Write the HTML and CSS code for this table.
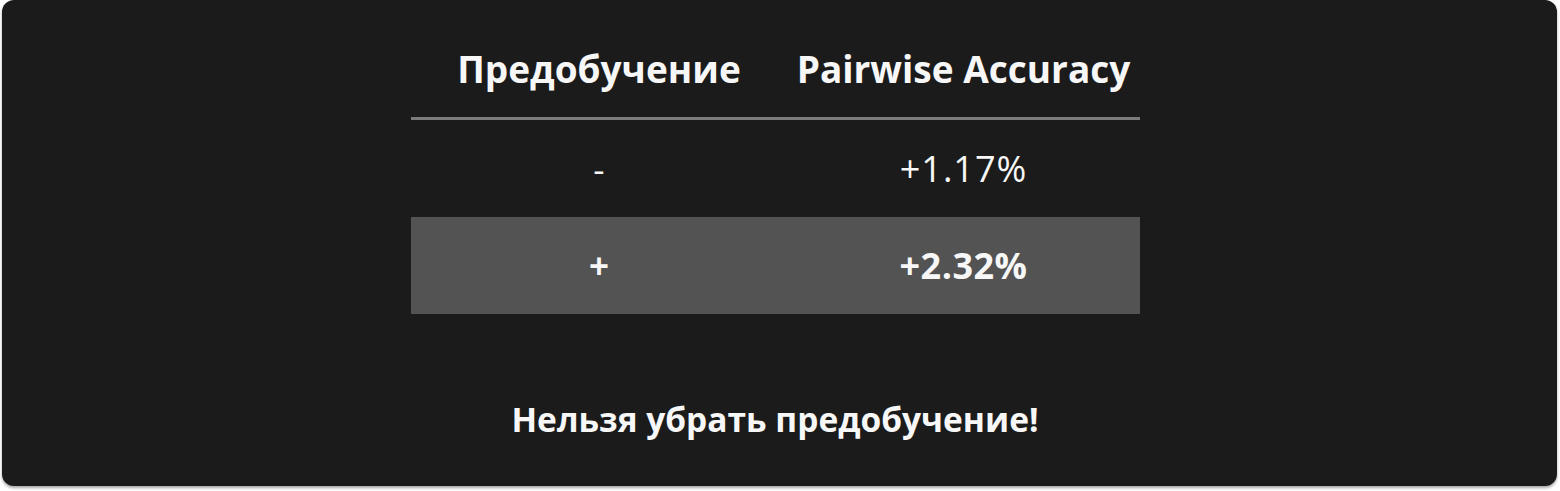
FILE: index.html
```html
<!DOCTYPE html>
<html lang="ru">
<head>
<meta charset="utf-8">
<title>Pairwise Accuracy</title>
<link rel="stylesheet" href="styles.css">
</head>
<body>
<div class="panel">
  <div class="table">
    <div class="cell head">Предобучение</div>
    <div class="cell head">Pairwise Accuracy</div>
    <div class="cell row">-</div>
    <div class="cell row num">+1.17%</div>
    <div class="cell row hl">+</div>
    <div class="cell row hl num">+2.32%</div>
  </div>
  <div class="note">Нельзя убрать предобучение!</div>
</div>
</body>
</html>
```

FILE: styles.css
```css
html, body {
  margin: 0;
  padding: 0;
  background: #ffffff;
}
body {
  width: 1560px;
  height: 491px;
  overflow: hidden;
  font-family: "Open Sans", "Noto Sans", sans-serif;
  color: #f7f7f7;
}
.panel {
  box-sizing: border-box;
  margin-left: 2px;
  width: 1555px;
  height: 486px;
  background: #1b1b1b;
  border-radius: 12px;
  box-shadow: 0 2px 3px rgba(0, 0, 0, 0.35);
  display: flex;
  flex-direction: column;
  align-items: center;
  padding-right: 9px;
}
.table {
  display: grid;
  grid-template-columns: 377px 352px;
}
.cell {
  text-align: center;
  display: flex;
  align-items: center;
  justify-content: center;
}
.head {
  font-size: 37px;
  font-weight: 700;
  line-height: 44px;
  padding: 47px 0 26px;
  border-bottom: 3px solid #7b7b7b;
}
.row {
  height: 97px;
  font-size: 35px;
  font-weight: 400;
}
.num {
  font-size: 36px;
  letter-spacing: 1px;
}
.hl {
  background: #535353;
  font-weight: 700;
}
.hl.num {
  letter-spacing: 0.5px;
}
.note {
  margin-top: 83px;
  font-size: 33.5px;
  font-weight: 700;
  line-height: 44px;
}
```
